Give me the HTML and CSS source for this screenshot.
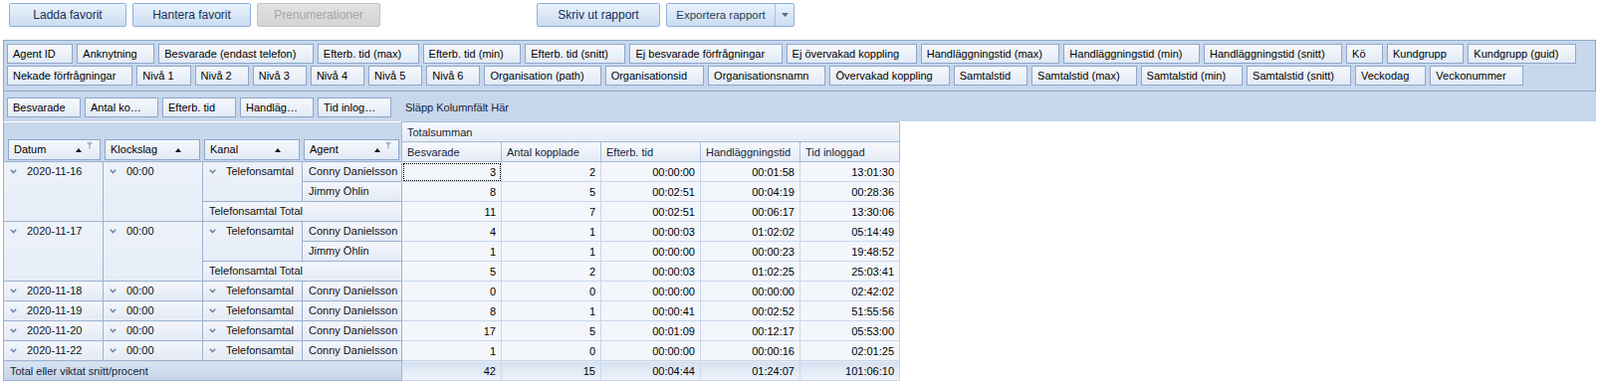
FILE: index.html
```html
<!DOCTYPE html>
<html lang="sv">
<head>
<meta charset="utf-8">
<title>Rapport</title>
<link rel="stylesheet" href="styles.css">
</head>
<body>
<div class="toolbar">
  <button class="tbtn w-load">Ladda favorit</button>
  <button class="tbtn w-manage">Hantera favorit</button>
  <button class="tbtn w-sub" disabled>Prenumerationer</button>
  <button class="tbtn w-print">Skriv ut rapport</button>
  <div class="split">
    <span class="split-label">Exportera rapport</span>
    <span class="split-arrow"><svg width="7" height="4" viewBox="0 0 7 4"><path d="M0 0h7L3.5 4z" fill="#55698a"/></svg></span>
  </div>
</div>

<div class="pivot">
  <div class="filter-area">
    <div class="frow">
      <span class="field">Agent ID</span>
      <span class="field">Anknytning</span>
      <span class="field">Besvarade (endast telefon)</span>
      <span class="field">Efterb. tid (max)</span>
      <span class="field">Efterb. tid (min)</span>
      <span class="field">Efterb. tid (snitt)</span>
      <span class="field">Ej besvarade förfrågningar</span>
      <span class="field">Ej övervakad koppling</span>
      <span class="field">Handläggningstid (max)</span>
      <span class="field">Handläggningstid (min)</span>
      <span class="field">Handläggningstid (snitt)</span>
      <span class="field">Kö</span>
      <span class="field">Kundgrupp</span>
      <span class="field">Kundgrupp (guid)</span>
    </div>
    <div class="frow">
      <span class="field">Nekade förfrågningar</span>
      <span class="field">Nivå 1</span>
      <span class="field">Nivå 2</span>
      <span class="field">Nivå 3</span>
      <span class="field">Nivå 4</span>
      <span class="field">Nivå 5</span>
      <span class="field">Nivå 6</span>
      <span class="field">Organisation (path)</span>
      <span class="field">Organisationsid</span>
      <span class="field">Organisationsnamn</span>
      <span class="field">Övervakad koppling</span>
      <span class="field">Samtalstid</span>
      <span class="field">Samtalstid (max)</span>
      <span class="field">Samtalstid (min)</span>
      <span class="field">Samtalstid (snitt)</span>
      <span class="field">Veckodag</span>
      <span class="field">Veckonummer</span>
    </div>
  </div>

  <div class="data-head">
    <div class="data-fields">
      <span class="field dfield">Besvarade</span>
      <span class="field dfield">Antal ko…</span>
      <span class="field dfield">Efterb. tid</span>
      <span class="field dfield">Handläg…</span>
      <span class="field dfield">Tid inlog…</span>
    </div>
    <div class="col-drop">Släpp Kolumnfält Här</div>
  </div>

  <table class="grid">
    <colgroup>
      <col class="c"><col class="c"><col class="c"><col class="c">
      <col class="c"><col class="c"><col class="c"><col class="c"><col class="c">
    </colgroup>
    <tr class="h1">
      <td class="row-head" colspan="4" rowspan="2">
        <div class="rh-buttons">
          <span class="rfield">Datum<i class="sort"></i><i class="funnel"><svg width="6" height="7" viewBox="0 0 6 7"><path d="M0 0h6L3.7 3v4L2.3 6V3z" fill="#a9b5c6"/></svg></i></span>
          <span class="rfield">Klockslag<i class="sort"></i></span>
          <span class="rfield">Kanal<i class="sort"></i></span>
          <span class="rfield">Agent<i class="sort"></i><i class="funnel"><svg width="6" height="7" viewBox="0 0 6 7"><path d="M0 0h6L3.7 3v4L2.3 6V3z" fill="#a9b5c6"/></svg></i></span>
        </div>
      </td>
      <td class="ch" colspan="5">Totalsumman</td>
    </tr>
    <tr class="h2">
      <td class="ch">Besvarade</td>
      <td class="ch">Antal kopplade</td>
      <td class="ch">Efterb. tid</td>
      <td class="ch">Handläggningstid</td>
      <td class="ch">Tid inloggad</td>
    </tr>

    <tr>
      <td class="rh" rowspan="3"><svg class="chev" width="7" height="5" viewBox="0 0 7 5"><path d="M0.8 0.8L3.5 3.6L6.2 0.8" fill="none" stroke="#6f84a3" stroke-width="1.5"/></svg>2020-11-16</td>
      <td class="rh" rowspan="3"><svg class="chev" width="7" height="5" viewBox="0 0 7 5"><path d="M0.8 0.8L3.5 3.6L6.2 0.8" fill="none" stroke="#6f84a3" stroke-width="1.5"/></svg>00:00</td>
      <td class="rh" rowspan="2"><svg class="chev" width="7" height="5" viewBox="0 0 7 5"><path d="M0.8 0.8L3.5 3.6L6.2 0.8" fill="none" stroke="#6f84a3" stroke-width="1.5"/></svg>Telefonsamtal</td>
      <td class="rh leaf">Conny Danielsson</td>
      <td class="d focus">3</td><td class="d">2</td><td class="d">00:00:00</td><td class="d">00:01:58</td><td class="d">13:01:30</td>
    </tr>
    <tr>
      <td class="rh leaf">Jimmy Öhlin</td>
      <td class="d">8</td><td class="d">5</td><td class="d">00:02:51</td><td class="d">00:04:19</td><td class="d">00:28:36</td>
    </tr>
    <tr>
      <td class="rh leaf" colspan="2">Telefonsamtal Total</td>
      <td class="d">11</td><td class="d">7</td><td class="d">00:02:51</td><td class="d">00:06:17</td><td class="d">13:30:06</td>
    </tr>

    <tr>
      <td class="rh" rowspan="3"><svg class="chev" width="7" height="5" viewBox="0 0 7 5"><path d="M0.8 0.8L3.5 3.6L6.2 0.8" fill="none" stroke="#6f84a3" stroke-width="1.5"/></svg>2020-11-17</td>
      <td class="rh" rowspan="3"><svg class="chev" width="7" height="5" viewBox="0 0 7 5"><path d="M0.8 0.8L3.5 3.6L6.2 0.8" fill="none" stroke="#6f84a3" stroke-width="1.5"/></svg>00:00</td>
      <td class="rh" rowspan="2"><svg class="chev" width="7" height="5" viewBox="0 0 7 5"><path d="M0.8 0.8L3.5 3.6L6.2 0.8" fill="none" stroke="#6f84a3" stroke-width="1.5"/></svg>Telefonsamtal</td>
      <td class="rh leaf">Conny Danielsson</td>
      <td class="d">4</td><td class="d">1</td><td class="d">00:00:03</td><td class="d">01:02:02</td><td class="d">05:14:49</td>
    </tr>
    <tr>
      <td class="rh leaf">Jimmy Öhlin</td>
      <td class="d">1</td><td class="d">1</td><td class="d">00:00:00</td><td class="d">00:00:23</td><td class="d">19:48:52</td>
    </tr>
    <tr>
      <td class="rh leaf" colspan="2">Telefonsamtal Total</td>
      <td class="d">5</td><td class="d">2</td><td class="d">00:00:03</td><td class="d">01:02:25</td><td class="d">25:03:41</td>
    </tr>

    <tr>
      <td class="rh leaf"><svg class="chev" width="7" height="5" viewBox="0 0 7 5"><path d="M0.8 0.8L3.5 3.6L6.2 0.8" fill="none" stroke="#6f84a3" stroke-width="1.5"/></svg>2020-11-18</td>
      <td class="rh leaf"><svg class="chev" width="7" height="5" viewBox="0 0 7 5"><path d="M0.8 0.8L3.5 3.6L6.2 0.8" fill="none" stroke="#6f84a3" stroke-width="1.5"/></svg>00:00</td>
      <td class="rh leaf"><svg class="chev" width="7" height="5" viewBox="0 0 7 5"><path d="M0.8 0.8L3.5 3.6L6.2 0.8" fill="none" stroke="#6f84a3" stroke-width="1.5"/></svg>Telefonsamtal</td>
      <td class="rh leaf">Conny Danielsson</td>
      <td class="d">0</td><td class="d">0</td><td class="d">00:00:00</td><td class="d">00:00:00</td><td class="d">02:42:02</td>
    </tr>
    <tr>
      <td class="rh leaf"><svg class="chev" width="7" height="5" viewBox="0 0 7 5"><path d="M0.8 0.8L3.5 3.6L6.2 0.8" fill="none" stroke="#6f84a3" stroke-width="1.5"/></svg>2020-11-19</td>
      <td class="rh leaf"><svg class="chev" width="7" height="5" viewBox="0 0 7 5"><path d="M0.8 0.8L3.5 3.6L6.2 0.8" fill="none" stroke="#6f84a3" stroke-width="1.5"/></svg>00:00</td>
      <td class="rh leaf"><svg class="chev" width="7" height="5" viewBox="0 0 7 5"><path d="M0.8 0.8L3.5 3.6L6.2 0.8" fill="none" stroke="#6f84a3" stroke-width="1.5"/></svg>Telefonsamtal</td>
      <td class="rh leaf">Conny Danielsson</td>
      <td class="d">8</td><td class="d">1</td><td class="d">00:00:41</td><td class="d">00:02:52</td><td class="d">51:55:56</td>
    </tr>
    <tr>
      <td class="rh leaf"><svg class="chev" width="7" height="5" viewBox="0 0 7 5"><path d="M0.8 0.8L3.5 3.6L6.2 0.8" fill="none" stroke="#6f84a3" stroke-width="1.5"/></svg>2020-11-20</td>
      <td class="rh leaf"><svg class="chev" width="7" height="5" viewBox="0 0 7 5"><path d="M0.8 0.8L3.5 3.6L6.2 0.8" fill="none" stroke="#6f84a3" stroke-width="1.5"/></svg>00:00</td>
      <td class="rh leaf"><svg class="chev" width="7" height="5" viewBox="0 0 7 5"><path d="M0.8 0.8L3.5 3.6L6.2 0.8" fill="none" stroke="#6f84a3" stroke-width="1.5"/></svg>Telefonsamtal</td>
      <td class="rh leaf">Conny Danielsson</td>
      <td class="d">17</td><td class="d">5</td><td class="d">00:01:09</td><td class="d">00:12:17</td><td class="d">05:53:00</td>
    </tr>
    <tr>
      <td class="rh leaf"><svg class="chev" width="7" height="5" viewBox="0 0 7 5"><path d="M0.8 0.8L3.5 3.6L6.2 0.8" fill="none" stroke="#6f84a3" stroke-width="1.5"/></svg>2020-11-22</td>
      <td class="rh leaf"><svg class="chev" width="7" height="5" viewBox="0 0 7 5"><path d="M0.8 0.8L3.5 3.6L6.2 0.8" fill="none" stroke="#6f84a3" stroke-width="1.5"/></svg>00:00</td>
      <td class="rh leaf"><svg class="chev" width="7" height="5" viewBox="0 0 7 5"><path d="M0.8 0.8L3.5 3.6L6.2 0.8" fill="none" stroke="#6f84a3" stroke-width="1.5"/></svg>Telefonsamtal</td>
      <td class="rh leaf">Conny Danielsson</td>
      <td class="d">1</td><td class="d">0</td><td class="d">00:00:00</td><td class="d">00:00:16</td><td class="d">02:01:25</td>
    </tr>
    <tr class="total">
      <td class="gt" colspan="4">Total eller viktat snitt/procent</td>
      <td class="d gd">42</td><td class="d gd">15</td><td class="d gd">00:04:44</td><td class="d gd">01:24:07</td><td class="d gd">101:06:10</td>
    </tr>
  </table>
</div>
</body>
</html>
```

FILE: styles.css
```css
* { box-sizing: border-box; }

body {
  margin: 0;
  background: #ffffff;
  font-family: "Liberation Sans", Arial, sans-serif;
  font-size: 11px;
  color: #000;
}

/* ---------- toolbar ---------- */
.toolbar {
  display: flex;
  align-items: flex-start;
  gap: 6px;
  padding: 3px 0 0 9px;
  height: 40px;
}

.tbtn {
  height: 24px;
  padding: 0;
  border: 1px solid #8eb0da;
  border-radius: 2px;
  background: linear-gradient(#eaf2fc, #cbdcf1);
  font-family: "Liberation Sans", Arial, sans-serif;
  font-size: 12px;
  color: #142f56;
}
.tbtn:disabled {
  border-color: #c4c4c4;
  background: linear-gradient(#e2e2e2, #d4d4d4);
  color: #a6a6a6;
}
.w-load { width: 118px; }
.w-manage { width: 119px; }
.w-sub { width: 124px; }
.w-print { width: 124px; margin-left: 151px; }

.split {
  display: flex;
  height: 24px;
  width: 129px;
  border: 1px solid #8eb0da;
  border-radius: 2px;
  background: linear-gradient(#eaf2fc, #cbdcf1);
  color: #253f62;
  font-size: 11.5px;
}
.split-label {
  flex: 1;
  display: flex;
  align-items: center;
  justify-content: center;
  border-right: 1px solid #a9c2e2;
}
.split-arrow {
  width: 18px;
  display: flex;
  align-items: center;
  justify-content: center;
}

/* ---------- pivot ---------- */
.pivot {
  margin-left: 3px;
  width: 1600px;
}

.filter-area {
  background: #c7d7ec;
  border: 1px solid #8ea8cc;
  padding: 3px 3px 5px 3px;
  display: flex;
  flex-direction: column;
  gap: 2px;
}
.frow {
  display: flex;
  gap: 4px;
}

.field {
  flex-shrink: 0;
  height: 20px;
  line-height: 18px;
  border: 1px solid #8fa7ca;
  background: linear-gradient(#f6f9fd, #e2eaf5);
  padding: 0 16px 0 5px;
  white-space: nowrap;
  color: #000;
}
.frow:first-child .field { padding-right: 16.5px; }

.data-head {
  display: flex;
  align-items: center;
  background: #c7d7ec;
  border-left: 1px solid #8ea8cc;
  padding: 6px 0 4px 3px;
  height: 30px;
}
.data-fields {
  display: flex;
  gap: 4px;
  width: 400px;
}
.dfield {
  width: 74px;
  padding: 0 0 0 5px;
  overflow: hidden;
}
.col-drop {
  color: #17253a;
}

/* ---------- grid ---------- */
.grid {
  border-collapse: collapse;
  table-layout: fixed;
  width: 900px;
}
.grid col.c { width: 100px; }

.grid td {
  padding: 0 4px;
  white-space: nowrap;
  overflow: hidden;
}

.row-head {
  background: #c7d7ec;
  border-left: 1px solid #8ea8cc;
  vertical-align: bottom;
  padding: 0 !important;
}
.rh-buttons {
  display: flex;
  gap: 4px;
  padding: 0 4px 1px 4px;
}
.rfield {
  position: relative;
  flex: 0 0 96px;
  height: 21px;
  line-height: 19px;
  border: 1px solid #8fa7ca;
  background: linear-gradient(#f6f9fd, #e2eaf5);
  padding-left: 5px;
  color: #000;
}
.rfield:first-child { flex-basis: 93px; }
.sort {
  position: absolute;
  right: 18px;
  top: 8px;
  width: 0;
  height: 0;
  border-left: 3px solid transparent;
  border-right: 3px solid transparent;
  border-bottom: 4px solid #111;
}
.funnel {
  position: absolute;
  right: 7px;
  top: 2px;
  line-height: 0;
}

.h1 td.ch { height: 19px; }
.h2 td.ch { height: 20px; }
.ch {
  background: linear-gradient(#f6f9fd, #e4ebf5);
  border: 1px solid #a7bbd8;
  color: #15233a;
  padding-left: 5px !important;
}

.grid tr { height: 20px; }

.rh {
  vertical-align: top;
  line-height: 19px;
  background: linear-gradient(#edf2f9, #e6edf7);
  border: 1px solid #9db2d1;
  color: #111;
  padding-left: 6px !important;
}
.rh.leaf {
  background: linear-gradient(#f3f6fb, #e3eaf5);
}
.chev {
  display: inline-block;
  margin: 0 10px 1px 0;
  vertical-align: middle;
}

.d {
  text-align: right;
  background: #f3f6fb;
  border: 1px solid #c8d7ec;
  color: #000;
  padding-right: 5px !important;
}
.focus {
  outline: 1px dotted #000;
  outline-offset: -2px;
}

.gt {
  background: linear-gradient(#d9e4f2, #c4d4ea);
  border: 1px solid #9db2d1;
  color: #15233a;
  padding-left: 6px !important;
}
.gd {
  background: linear-gradient(#d6e1f0, #eef3fa);
}
```
